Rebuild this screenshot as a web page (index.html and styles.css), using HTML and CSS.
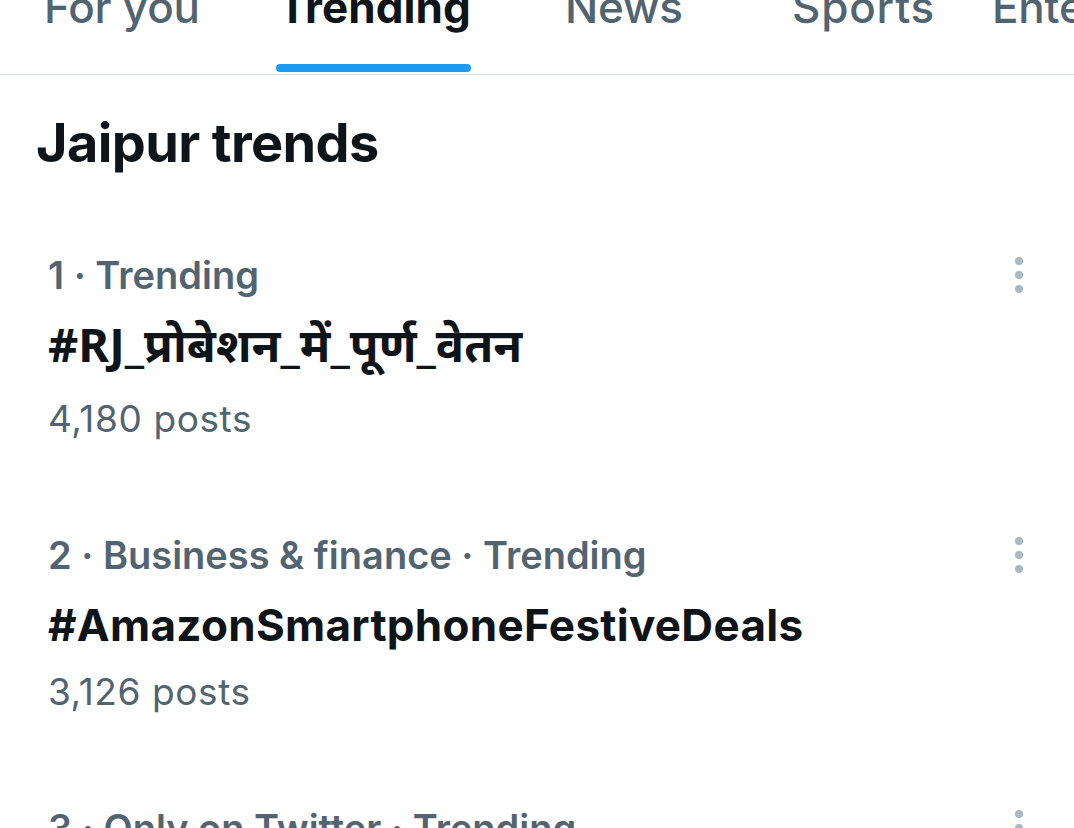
FILE: index.html
```html
<!DOCTYPE html>
<html lang="en">
<head>
<meta charset="utf-8">
<title>Trending</title>
<link rel="stylesheet" href="styles.css">
</head>
<body>
<div class="app">
  <nav class="tabs">
    <div class="tab"><span class="tab-label">For you</span></div>
    <div class="tab tab-active"><span class="tab-label">Trending<span class="indicator"></span></span></div>
    <div class="tab"><span class="tab-label">News</span></div>
    <div class="tab tab-sports"><span class="tab-label">Sports</span></div>
    <div class="tab"><span class="tab-label">Entertainment</span></div>
  </nav>
  <h1 class="section-title">Jaipur trends</h1>
  <ul class="trends">
    <li class="trend">
      <div class="trend-body">
        <div class="trend-meta">1 · Trending</div>
        <div class="trend-name trend-name-deva">#RJ_प्रोबेशन_में_पूर्ण_वेतन</div>
        <div class="trend-count">4,180 posts</div>
      </div>
      <div class="kebab"><span></span><span></span><span></span></div>
    </li>
    <li class="trend">
      <div class="trend-body">
        <div class="trend-meta">2 · Business &amp; finance · Trending</div>
        <div class="trend-name">#AmazonSmartphoneFestiveDeals</div>
        <div class="trend-count">3,126 posts</div>
      </div>
      <div class="kebab"><span></span><span></span><span></span></div>
    </li>
    <li class="trend">
      <div class="trend-body">
        <div class="trend-meta">3 · Only on Twitter · Trending</div>
        <div class="trend-name">#Trending</div>
        <div class="trend-count">2,000 posts</div>
      </div>
      <div class="kebab"><span></span><span></span><span></span></div>
    </li>
  </ul>
</div>
</body>
</html>
```
FILE: styles.css
```css
html, body {
  margin: 0;
  padding: 0;
  background: #ffffff;
}
body {
  font-family: Inter, Roboto, "Noto Sans", sans-serif;
  color: #0f1419;
  overflow: hidden;
  height: 828px;
}
.app {
  margin-top: -30px;
}
.tabs {
  display: grid;
  grid-template-columns: 234px 287px 227px 200px auto;
  height: 105px;
  border-bottom: 1px solid #cfd9de;
  box-sizing: border-box;
  white-space: nowrap;
  overflow: hidden;
  padding-left: 44px;
}
.tab {
  display: flex;
  padding-top: 11px;
}
.tab-label {
  display: inline-flex;
  flex-direction: column;
  font-size: 44px;
  line-height: 52px;
  font-weight: 500;
  color: #536471;
  letter-spacing: -0.2px;
}
.tab-sports .tab-label {
  letter-spacing: 0.8px;
}
.tab-active .tab-label {
  color: #0f1419;
  font-weight: 700;
  letter-spacing: 0.1px;
}
.indicator {
  display: block;
  height: 8px;
  border-radius: 4px;
  background: #1d9bf0;
  margin: 31px 0 0 -2px;
}
.section-title {
  margin: 0;
  padding: 36px 0 0 36px;
  font-size: 54px;
  line-height: 64px;
  font-weight: 700;
  letter-spacing: -0.6px;
}
.trends {
  list-style: none;
  margin: 0;
  padding: 0;
}
.trend {
  display: flex;
  align-items: flex-start;
  padding: 64px 51px 5px 48px;
}
.trend-body {
  flex: 1;
  min-width: 0;
}
.trend-meta {
  font-size: 38px;
  line-height: 72px;
  font-weight: 600;
  color: #536471;
  letter-spacing: 0;
}
.trend-name {
  font-size: 44px;
  line-height: 69px;
  font-weight: 700;
  color: #0f1419;
  letter-spacing: 0.3px;
}
.trend-name-deva {
  font-family: "Noto Sans", "Noto Sans Devanagari", Inter, sans-serif;
  font-size: 47px;
  line-height: 66px;
  padding-bottom: 10px;
  letter-spacing: 0;
}
.trend-count {
  font-size: 37px;
  line-height: 63px;
  font-weight: 400;
  color: #536471;
  letter-spacing: 0.6px;
}
.kebab {
  display: flex;
  flex-direction: column;
  gap: 6px;
  padding-top: 18px;
}
.kebab span {
  display: block;
  width: 8px;
  height: 8px;
  border-radius: 50%;
  background: #aab8c2;
}
```
